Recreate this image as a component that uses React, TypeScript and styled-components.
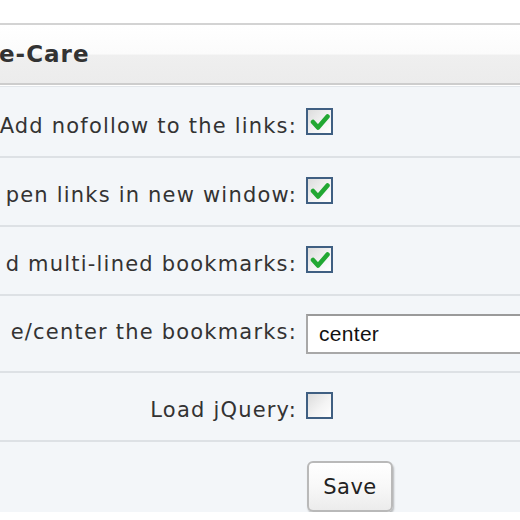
import React from "react";
import styled, { createGlobalStyle } from "styled-components";

const Global = createGlobalStyle`
  html, body { margin: 0; padding: 0; background: #ffffff; }
  body { width: 520px; height: 520px; overflow: hidden; font-family: "DejaVu Sans", Verdana, sans-serif; }
`;

const Page = styled.div`
  padding-top: 23px;
  width: 520px;
  overflow: hidden;
`;

const Panel = styled.div`
  background: #f3f6f9;
  border-top: 2px solid #d3d3d3;
`;

const Header = styled.div`
  height: 58px;
  display: flex;
  align-items: center;
  background: linear-gradient(#ffffff 0%, #fbfbfb 50%, #efefef 52%, #ececec 100%);
  border-bottom: 2px solid #cdcdcd;
  box-shadow: 0 1px 0 #ffffff, 0 2px 0 #e2e6ea;
  margin-bottom: 4px;
`;

const Title = styled.h3`
  margin: 0 0 0 -1px;
  font-size: 23px;
  font-weight: bold;
  letter-spacing: 1px;
  color: #333333;
  white-space: nowrap;
`;

const Row = styled.div<{ $h: number }>`
  display: flex;
  height: ${(p) => p.$h}px;
  border-bottom: 2px solid #dde1e5;
  align-items: flex-start;
`;

const LabelCell = styled.div<{ $pt: number }>`
  width: 297px;
  flex: none;
  display: flex;
  justify-content: flex-end;
  padding-top: ${(p) => p.$pt}px;
  font-size: 21px;
  color: #333333;
  white-space: nowrap;
  letter-spacing: 1.2px;
`;

const FieldCell = styled.div<{ $pt: number }>`
  padding-left: 9px;
  padding-top: ${(p) => p.$pt}px;
  display: flex;
`;

const Box = styled.span`
  width: 23px;
  height: 23px;
  border: 2px solid #3f5f82;
  background: linear-gradient(135deg, #dcdcdc 0%, #f3f3f3 55%, #ffffff 100%);
  display: flex;
  align-items: center;
  justify-content: center;
`;

const TextInput = styled.div`
  width: 240px;
  height: 36px;
  border: 2px solid #a8a8a8;
  border-top-color: #9a9a9a;
  background: #ffffff;
  display: flex;
  align-items: center;
  padding-left: 11px;
  font-family: "Liberation Sans", Arial, sans-serif;
  font-size: 21px;
  letter-spacing: 0.3px;
  color: #111111;
`;

const SaveButton = styled.button`
  width: 86px;
  height: 51px;
  border: 2px solid #b9b9b9;
  border-radius: 6px;
  background: linear-gradient(#ffffff 0%, #f8f8f8 50%, #ececec 100%);
  box-shadow: 1px 2px 2px rgba(0, 0, 0, 0.25);
  font-family: "DejaVu Sans", Verdana, sans-serif;
  font-size: 21px;
  letter-spacing: 0.5px;
  color: #222222;
  padding: 0;
`;

const ButtonRow = styled.div`
  padding: 19px 0 0 307px;
`;

const Check = ({ on }: { on: boolean }) => (
  <Box>
    {on && (
      <svg width="20" height="18" viewBox="0 0 20 18">
        <path d="M3 9 L8 14.5 L17.5 3.5" fill="none" stroke="#22a832" strokeWidth="4.5" strokeLinecap="round" strokeLinejoin="round" />
      </svg>
    )}
  </Box>
);

const rows: { label: string; on: boolean }[] = [
  { label: "Add nofollow to the links:", on: true },
  { label: "pen links in new window:", on: true },
  { label: "d multi-lined bookmarks:", on: true },
];

export default function App() {
  return (
    <Page>
      <Global />
      <Panel>
        <Header>
          <Title>e-Care</Title>
        </Header>
        {rows.map((r) => (
          <Row key={r.label} $h={67}>
            <LabelCell $pt={25}>{r.label}</LabelCell>
            <FieldCell $pt={19}>
              <Check on={r.on} />
            </FieldCell>
          </Row>
        ))}
        <Row $h={75}>
          <LabelCell $pt={24}>e/center the bookmarks:</LabelCell>
          <FieldCell $pt={18}>
            <TextInput>center</TextInput>
          </FieldCell>
        </Row>
        <Row $h={67}>
          <LabelCell $pt={25}>Load jQuery:</LabelCell>
          <FieldCell $pt={19}>
            <Check on={false} />
          </FieldCell>
        </Row>
        <ButtonRow>
          <SaveButton>Save</SaveButton>
        </ButtonRow>
      </Panel>
    </Page>
  );
}
